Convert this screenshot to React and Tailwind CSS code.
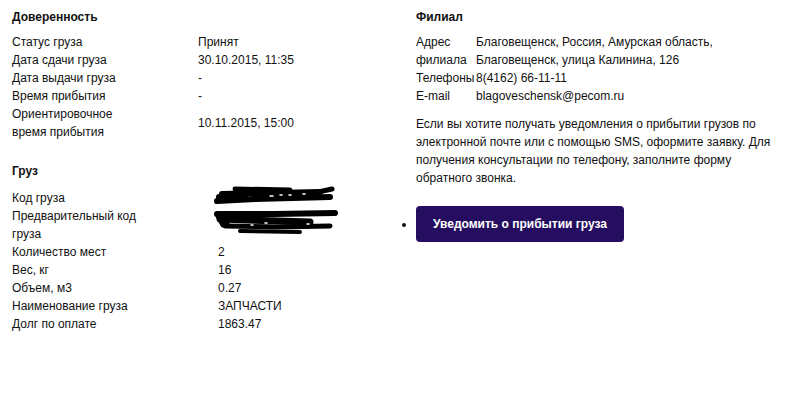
import React from "react";

const trust = [
  ["Статус груза", "Принят"],
  ["Дата сдачи груза", "30.10.2015, 11:35"],
  ["Дата выдачи груза", "-"],
  ["Время прибытия", "-"],
  ["Ориентировочное время прибытия", "10.11.2015, 15:00"],
];

const cargo = [
  ["Количество мест", "2"],
  ["Вес, кг", "16"],
  ["Объем, м3", "0.27"],
  ["Наименование груза", "ЗАПЧАСТИ"],
  ["Долг по оплате", "1863.47"],
];

function Scribble() {
  return (
    <svg
      className="absolute left-[-3px] top-[-4px] overflow-visible"
      width="125"
      height="50"
      viewBox="0 0 125 50"
    >
      <g stroke="#000" strokeLinecap="round" strokeLinejoin="round" fill="none">
        <path d="M2 16 L40 14 L115 12" strokeWidth="6" />
        <path d="M7 9 L60 8 L105 7" strokeWidth="6" />
        <path d="M20 4 L75 5" strokeWidth="5" />
        <path d="M85 11 L117 4" strokeWidth="5" />
        <path d="M4 12 L30 10" strokeWidth="6" />
        <path d="M2 29 L60 29 L120 28" strokeWidth="6" />
        <path d="M5 34 L95 37" strokeWidth="7" />
        <path d="M10 41 L60 42 L115 41" strokeWidth="5" />
        <path d="M25 46 L85 47" strokeWidth="4" />
        <path d="M3 31 L8 40 L12 38" strokeWidth="5" />
      </g>
      <g stroke="#fff" strokeWidth="1.5" strokeLinecap="round">
        <path d="M55 11 L58 11 M65 10 L67 10 M74 10 L76 10 M88 9 L90 9" />
        <path d="M36 40 L38 40 M50 38 L52 38 M92 39 L94 39" />
      </g>
    </svg>
  );
}

function Rows({ rows, labelW }) {
  return (
    <div className="flex flex-col">
      {rows.map(([k, v]) => (
        <div key={k} className="flex items-center">
          <div className={labelW}>
            <span className="block w-[128px]">{k}</span>
          </div>
          <div>{v}</div>
        </div>
      ))}
    </div>
  );
}

export default function App() {
  return (
    <div
      className="w-[791px] h-[400px] bg-white text-[#111] text-[12px] leading-[18px] flex"
      style={{ fontFamily: '"Liberation Sans", Arial, sans-serif' }}
    >
      <div className="w-[416px] shrink-0 pl-[12px] pt-[8px]">
        <h2 className="font-bold">Доверенность</h2>
        <div className="mt-[7px]">
          <Rows rows={trust} labelW="w-[186px]" />
        </div>

        <h2 className="font-bold mt-[21px]">Груз</h2>
        <div className="mt-[9px] flex flex-col">
          <div className="flex">
            <div className="w-[206px]">Код груза</div>
            <div className="relative">
              <Scribble />
            </div>
          </div>
          <div className="flex">
            <div className="w-[206px]">
              <span className="block w-[130px]">Предварительный код груза</span>
            </div>
            <div></div>
          </div>
          <Rows rows={cargo} labelW="w-[206px]" />
        </div>
      </div>

      <div className="w-[372px] pt-[8px]">
        <h2 className="font-bold">Филиал</h2>
        <div className="mt-[7px] flex flex-col">
          <div className="flex">
            <div className="w-[60px] shrink-0">Адрес филиала</div>
            <div>
              Благовещенск, Россия, Амурская область,
              <br />
              Благовещенск, улица Калинина, 126
            </div>
          </div>
          <div className="flex">
            <div className="w-[60px] shrink-0 whitespace-nowrap">Телефоны</div>
            <div>8(4162) 66-11-11</div>
          </div>
          <div className="flex">
            <div className="w-[60px] shrink-0">E-mail</div>
            <div>blagoveschensk@pecom.ru</div>
          </div>
        </div>
        <p className="mt-[10px] w-[370px]">
          Если вы хотите получать уведомления о прибытии грузов по электронной
          почте или с помощью SMS, оформите заявку. Для получения консультации
          по телефону, заполните форму обратного звонка.
        </p>
        <ul className="list-disc mt-[19px] marker:text-[#111]">
          <li>
            <button className="inline-block h-[36px] px-[17px] rounded-[4px] bg-[#250e5f] text-white font-bold text-[12px] leading-[36px]">
              Уведомить о прибытии груза
            </button>
          </li>
        </ul>
      </div>
    </div>
  );
}
